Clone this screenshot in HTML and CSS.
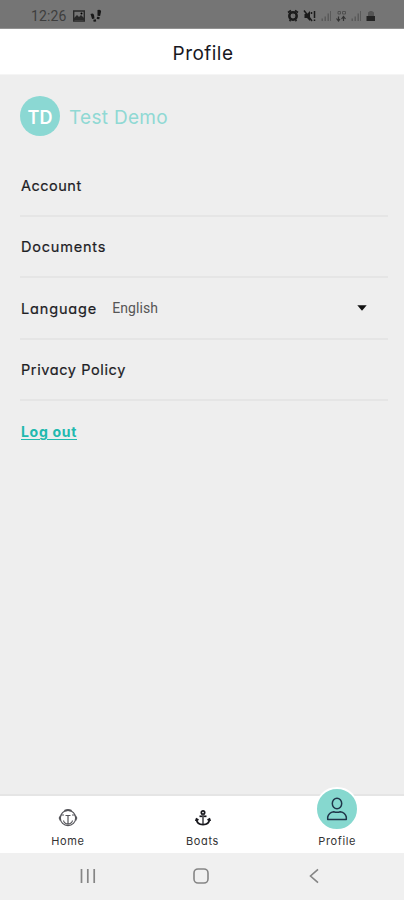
FILE: index.html
```html
<!DOCTYPE html>
<html lang="en">
<head>
<meta charset="utf-8">
<title>Profile</title>
<link rel="stylesheet" href="styles.css">
</head>
<body>
<div class="screen">
  <div class="status">
    <span class="clock">12:26</span>
    <svg class="left-icons" width="34" height="14" viewBox="0 0 34 14">
      <path d="M1.700 2h10.600v10H1.700z" fill="none" stroke="#292929" stroke-width="1.400"/>
      <path d="M2 11V9l3-3 2 2 2-2 3 3v2z" fill="#292929"/><circle cx="9.500" cy="4.500" r="1"/>
      <path d="M18.500 5q3.200-1.500 3.600 1.500l.4 3-2.400.4zM21.300 10.800l2.600-.5.3 2.200-2.600.3zM25.500 1q3.600-1 3.600 1.500l-1 4.500-2.600-.3zM25 7.700l2.700.3-.4 2.200-2.600-.3z" fill="#191919"/>
    </svg>
    <svg class="right-icons" width="90" height="14" viewBox="0 0 90 14">
      <g fill="none" stroke="#1b1b1b"><circle cx="6" cy="7" r="3.700" stroke-width="2.500"/><path d="M1 3.500l3-2M11 3.500l-3-2M2.500 12l1-1M9.500 12l-1-1" stroke-width="1.800"/><path d="M6 5v2.300h2" stroke="#666"/></g>
      <path d="M17.500 5h2.500l3-3v10l-3-3h-2.500z" fill="#1b1b1b"/><path d="M17 1.500l8 10.500M27.500 2v7M27.500 10.500v1.500M24.500 3v2" stroke="#1b1b1b" stroke-width="1.500"/>
      <g fill="#5a5a5a"><path d="M34.500 9.500h1.500v2.500h-1.500zM37.500 7.500h1.500v4.500h-1.500zM40.500 4.500h1.500v7.500h-1.500zM43 2h1v10h-1z"/><path d="M64.500 9.500h1.500v2.500h-1.500zM67.500 7.500h1.500v4.500h-1.500zM70.500 4.500h1.500v7.500h-1.500zM73 2h1v10h-1z"/></g>
      <path d="M51 2.500h2.500v2.500h-2.500zM55.500 2.500h3v2.500h-3z" fill="none" stroke="#505050"/><path d="M51.500 7.500v4.500M49.500 9.500l2 2.500 1.500-2M56.500 12V7.500M54.500 10l2-2.500 2 2.500" fill="none" stroke="#333" stroke-width="1.200"/>
      <path d="M81 3.500l2-1.500h2l2 1.500v3.500h-6z" fill="#555"/><path d="M79.500 7h8.500v5h-8.500z" fill="#242424"/>
    </svg>
  </div>
  <header class="header"><h1>Profile</h1></header>
  <main class="content">
    <div class="user"><span class="avatar">TD</span><span class="name">Test Demo</span></div>
    <div class="row"><span class="account">Account</span></div>
    <div class="row"><span class="documents">Documents</span></div>
    <div class="row"><span class="language">Language</span><span class="value">English</span>
      <svg class="caret" width="10" height="6" viewBox="0 0 10 6"><path d="M.3.3h9.400L5 5.700z" fill="#111"/></svg></div>
    <div class="row"><span class="privacy">Privacy Policy</span></div>
    <div class="row last"><a class="logout">Log out</a></div>
  </main>
  <nav class="tabs">
    <div class="tab">
      <div class="icon"><svg width="20" height="20" viewBox="0 0 20 20" fill="none" stroke="#55555a" stroke-width="1.200">
        <circle cx="10" cy="10" r="7.700"/><path d="M6.500 2.800q3.500-1.600 7 0" stroke-width="1.800"/><path d="M10 7v9.500M7.500 7.500h5M2.300 8l-1 2 1 2.500M17.700 8l1 2-1 2.500M5.500 12.500q.5 3 4.500 3.700 4-.7 4.500-3.700M3 7h3M14 7h3"/></svg></div>
      <span class="home">Home</span>
    </div>
    <div class="tab">
      <div class="icon"><svg width="20" height="20" viewBox="0 0 20 20" fill="none" stroke="#17171d" stroke-width="1.700">
        <circle cx="10" cy="4.500" r="1.700"/><path d="M6.500 8.300h7"/><path d="M10 6.500v10" stroke="#55555a"/><path d="M3.500 11q.2 5.600 6.500 5.700 6.300-.1 6.500-5.700M2.700 13l.8-2 2 1M17.300 13l-.8-2-2 1"/></svg></div>
      <span class="boats">Boats</span>
    </div>
    <div class="tab">
      <div class="icon active"><svg width="24" height="26" viewBox="0 0 24 26" fill="none" stroke="#20364a" stroke-width="1.500">
        <ellipse cx="12" cy="7.500" rx="4.700" ry="5.200"/><path d="M2.700 23.500v-2.500q1-4.500 6-5.300 3.300 1.200 6.600 0 5 .8 6 5.300v2.500z" stroke-linejoin="round"/></svg></div>
      <span class="profile">Profile</span>
    </div>
  </nav>
  <div class="system">
    <svg width="16" height="16" viewBox="0 0 16 16" stroke="#858585" stroke-width="1.700"><path d="M1.500 1v14M7.800 1v14M14.200 1v14"/></svg>
    <svg width="16" height="16" viewBox="0 0 16 16" fill="none" stroke="#858585" stroke-width="1.600"><rect x="1" y="1" width="14" height="14" rx="4"/></svg>
    <svg width="16" height="16" viewBox="0 0 16 16" fill="none" stroke="#858585" stroke-width="1.600"><path d="M12 1.300L4.500 8l7.500 6.700"/></svg>
  </div>
</div>
</body>
</html>
```
FILE: styles.css
```css
* { box-sizing: border-box; }
body { margin: 0; background: #eee; color: #202024; font-family: Inter, "Liberation Sans", sans-serif; font-feature-settings: "cv11"; }
.screen { width: 404px; height: 900px; display: flex; flex-direction: column; overflow: hidden; }
.status { height: 29px; flex: none; background: #757575; border-bottom: 1px solid #929292; display: flex; align-items: center; padding: 3px 27px 0 31px; }
.clock { font: 14px/16px Roboto, sans-serif; color: #3e3e3e; letter-spacing: .1px; width: 41px; }
.right-icons { margin-left: auto; }
.header { height: 46px; flex: none; background: #fff; border-bottom: 1px solid #f5f5f5; display: flex; align-items: center; justify-content: center; padding: 5px 0 0 2px; }
h1 { margin: 0; font-size: 19px; line-height: 24px; font-weight: 400; letter-spacing: .45px; color: #18181f; }
.content { flex: 1; padding: 21px 16px 0 20px; }
.user { display: flex; align-items: center; height: 40px; margin-bottom: 19px; }
.avatar { width: 40px; height: 40px; border-radius: 50%; background: #8bd8d3; color: #fff; font-size: 18px; font-weight: 600; display: flex; align-items: center; justify-content: center; padding-top: 2px; }
.name { margin: 2px 0 0 9px; font-size: 19px; color: #90d9d4; letter-spacing: .3px; }
.row { height: 61.500px; border-bottom: 2px solid #e5e5e5; display: flex; align-items: center; padding: 2px 0 0 1px; font-size: 14.500px; line-height: 20px; font-weight: 400; -webkit-text-stroke: .2px; letter-spacing: .6px; }
.account { letter-spacing: .5px; }
.language { letter-spacing: .85px; }
.documents { letter-spacing: .8px; }
.privacy { letter-spacing: .6px; }
.last { border: 0; padding-top: 0; }
.value { font: 14px/20px Roboto, sans-serif; letter-spacing: .1px; color: #555; margin: -2px 0 0 15px; -webkit-text-stroke: 0; }
.caret { margin: -2px 21px 0 auto; }
.logout { color: #22b9ae; font-size: 14px; letter-spacing: .7px; font-weight: 700; -webkit-text-stroke: 0; text-decoration: underline; text-decoration-thickness: 1px; text-underline-offset: 2px; }
.tabs { height: 59px; flex: none; background: #fff; border-top: 2px solid #e5e5e5; display: flex; }
.tab { flex: 1; display: flex; flex-direction: column; align-items: center; justify-content: flex-end; padding: 0 0 4px 1px; font-size: 11px; line-height: 16px; letter-spacing: .65px; color: #333; }
.icon { height: 20px; margin-bottom: 5px; }
.active { width: 44px; height: 44px; flex: none; margin-bottom: 2px; border: 2px solid #fff; border-radius: 50%; background: #86d8cf; display: flex; align-items: center; justify-content: center; }
.system { height: 47px; flex: none; background: #f0f0f0; display: flex; align-items: center; justify-content: space-between; padding: 0 82px 1px 80px; }
```
